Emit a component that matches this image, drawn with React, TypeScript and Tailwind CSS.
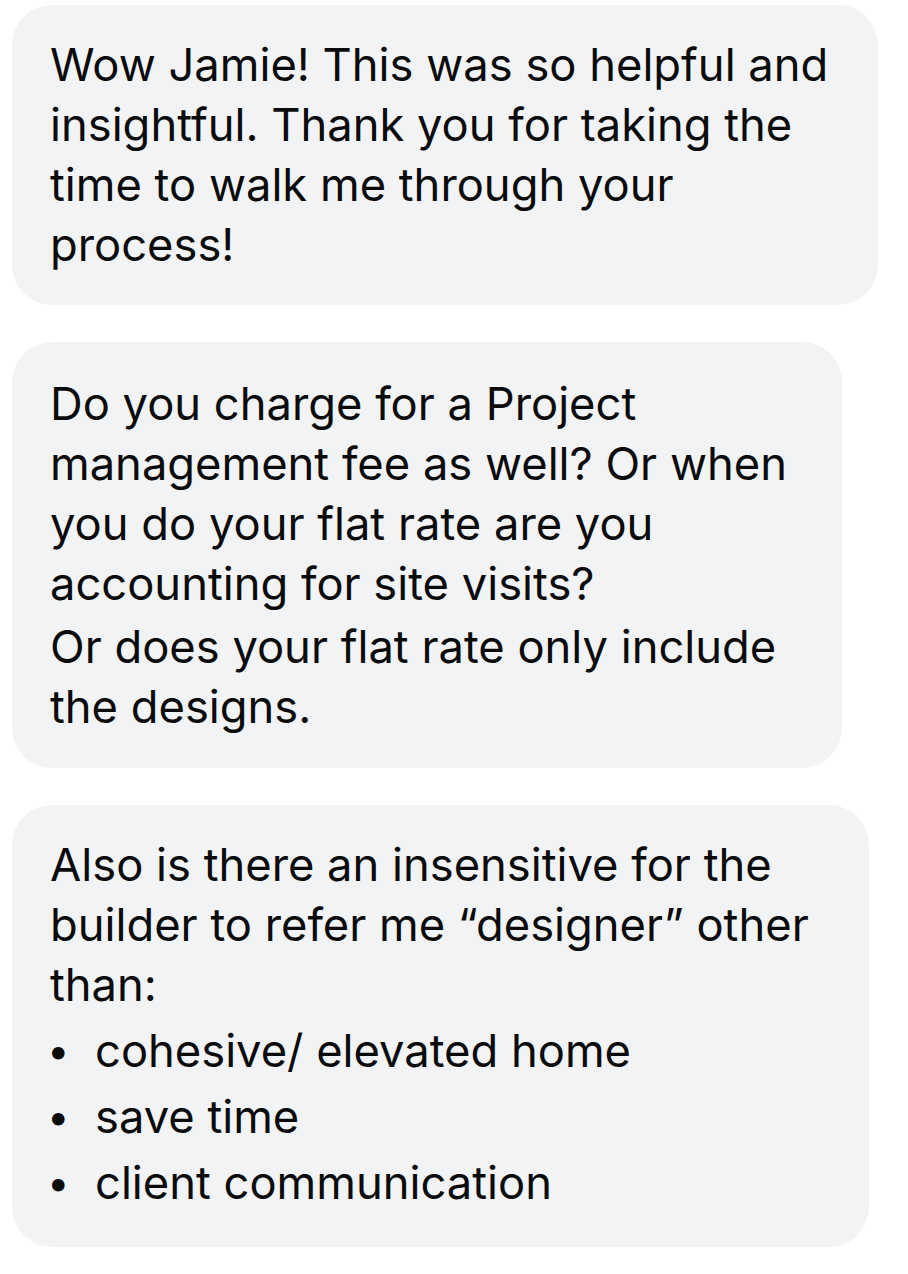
export default function App() {
  const font = { fontFamily: "Inter, 'Noto Sans', sans-serif" };
  return (
    <div className="min-h-screen bg-white pl-3 pt-[5px]" style={font}>
      <div className="flex flex-col gap-[37px] text-[45.3px] leading-[60px] text-[#0b0b0c]">
        <div className="w-[866px] rounded-[40px] bg-[#f2f3f5] pl-[38px] py-[30px] whitespace-nowrap">
          <div>Wow Jamie! This was so helpful and</div>
          <div>insightful. Thank you for taking the</div>
          <div>time to walk me through your</div>
          <div>process!</div>
        </div>
        <div className="w-[830px] rounded-[40px] bg-[#f2f3f5] pl-[38px] pt-[32px] pb-[31px] whitespace-nowrap">
          <div>Do you charge for a Project</div>
          <div>management fee as well? Or when</div>
          <div>you do your flat rate are you</div>
          <div>accounting for site visits?</div>
          <div className="mt-[3px]">Or does your flat rate only include</div>
          <div>the designs.</div>
        </div>
        <div className="w-[857px] rounded-[40px] bg-[#f2f3f5] pl-[38px] pt-[30px] pb-[31px] whitespace-nowrap">
          <div>Also is there an insensitive for the</div>
          <div>builder to refer me “designer” other</div>
          <div>than:</div>
          <ul className="mt-[3px]">
            {["cohesive/ elevated home", "save time", "client communication"].map((t) => (
              <li key={t} className="flex h-[66px] items-center">
                <span className="-ml-[3px] w-[48px] text-[40px]">•</span>
                <span>{t}</span>
              </li>
            ))}
          </ul>
        </div>
      </div>
    </div>
  );
}
